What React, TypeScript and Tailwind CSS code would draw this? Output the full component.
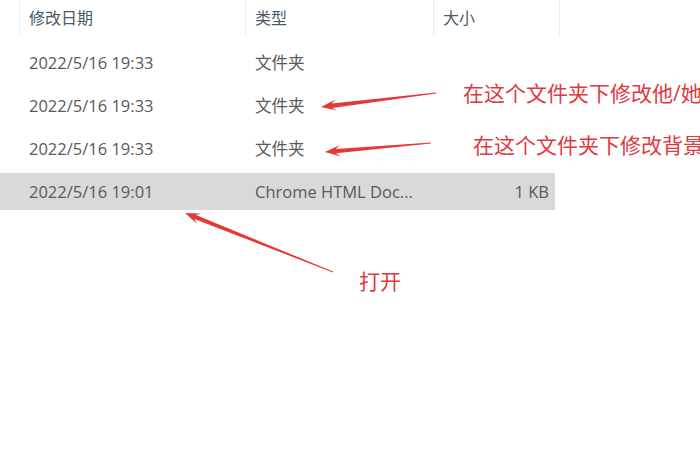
import React from "react";

const rows = [
  { date: "2022/5/16 19:33", type: "文件夹", size: "" },
  { date: "2022/5/16 19:33", type: "文件夹", size: "" },
  { date: "2022/5/16 19:33", type: "文件夹", size: "" },
  { date: "2022/5/16 19:01", type: "Chrome HTML Doc...", size: "1 KB", selected: true },
];

// tapered hand-drawn style arrow, tail -> tip
function arrowPoints(tx: number, ty: number, px: number, py: number) {
  const dx = px - tx;
  const dy = py - ty;
  const len = Math.hypot(dx, dy);
  const ux = dx / len;
  const uy = dy / len;
  const nx = -uy;
  const ny = ux;
  const headLen = 13;
  const headW = 5.5;
  const shaftW = 2.2;
  const bx = px - ux * headLen;
  const by = py - uy * headLen;
  const pts = [
    [tx + nx * 0.4, ty + ny * 0.4],
    [bx + nx * shaftW + ux * 2, by + ny * shaftW + uy * 2],
    [bx + nx * headW - ux * 2, by + ny * headW - uy * 2],
    [px, py],
    [bx - nx * headW - ux * 2, by - ny * headW - uy * 2],
    [bx - nx * shaftW + ux * 2, by - ny * shaftW + uy * 2],
    [tx - nx * 0.4, ty - ny * 0.4],
  ];
  return pts.map((p) => p[0].toFixed(1) + "," + p[1].toFixed(1)).join(" ");
}

const arrows = [
  [436, 93, 321, 107],
  [431, 143, 325, 152],
  [333, 272, 185, 213],
];

export default function App() {
  return (
    <div
      className="relative h-[470px] w-[700px] overflow-hidden bg-white"
      style={{ fontFamily: '"Open Sans", "Noto Sans CJK SC", sans-serif' }}
    >
      <div className="flex h-[36px] text-[16px] text-[#4b5866]">
        <div className="w-[20px] border-r border-[#f0f0f0]" />
        <div className="flex w-[226px] items-center border-r border-[#ececec] pl-[9px]">修改日期</div>
        <div className="flex w-[188px] items-center border-r border-[#ececec] pl-[9px]">类型</div>
        <div className="flex w-[126px] items-center border-r border-[#ececec] pl-[9px]">大小</div>
      </div>

      <div className="flex w-[555px] flex-col gap-[6px] pt-[8px] text-[16.5px] text-[#5a5a5a]">
        {rows.map((r, i) => (
          <div
            key={i}
            className={
              "flex h-[37px] items-center pt-[2px] " + (r.selected ? "bg-[#d9d9d9]" : "")
            }
          >
            <div className="w-[20px]" />
            <div className="w-[226px] pl-[9px]">{r.date}</div>
            <div className="w-[188px] pl-[9px]">{r.type}</div>
            <div className="flex-1 pr-[6px] text-right">{r.size}</div>
          </div>
        ))}
      </div>

      <svg className="absolute left-0 top-0" width="700" height="470">
        {arrows.map((a, i) => (
          <polygon key={i} points={arrowPoints(a[0], a[1], a[2], a[3])} fill="#e53935" />
        ))}
      </svg>

      <div className="absolute left-[463px] top-[78px] whitespace-nowrap text-[21px] leading-[30px] text-[#e0393f]">
        在这个文件夹下修改他/她
      </div>
      <div className="absolute left-[473px] top-[130px] whitespace-nowrap text-[21px] leading-[30px] text-[#e0393f]">
        在这个文件夹下修改背景
      </div>
      <div className="absolute left-[359px] top-[266px] whitespace-nowrap text-[21px] leading-[30px] text-[#e0393f]">
        打开
      </div>
    </div>
  );
}
